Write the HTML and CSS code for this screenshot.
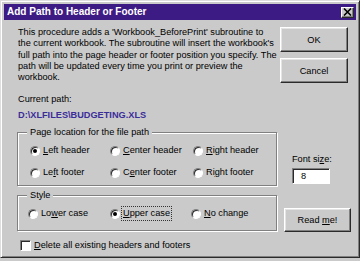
FILE: index.html
```html
<!DOCTYPE html>
<html lang="en">
<head>
  <meta charset="UTF-8">
  <meta name="viewport" content="width=device-width, initial-scale=1.0">
  <title>Add Path to Header or Footer</title>
  <link rel="stylesheet" href="styles.css">
</head>
<body>
  <div class="dialog">
    <div class="titlebar">
      <span class="title">Add Path to Header or Footer</span>
      <span class="close-btn">
        <svg width="9" height="8" viewBox="0 0 9 8"><path d="M1 0.5 L8 7.5 M8 0.5 L1 7.5" stroke="#000" stroke-width="1.6"/></svg>
      </span>
    </div>

    <div class="dialog-body">
      <div class="main-col">
        <p class="intro">This procedure adds a 'Workbook_BeforePrint' subroutine to the current workbook. The subroutine will insert the workbook's full path into the page header or footer position you specify. The path will be updated every time you print or preview the workbook.</p>

        <div class="path-label">Current path:</div>
        <div class="path-value">D:\XLFILES\BUDGETING.XLS</div>

        <div class="group group-location">
          <span class="group-label">Page location for the file path</span>
          <div class="radio-grid location-grid">
            <div class="radio-item"><span class="radio checked"></span><span><u>L</u>eft header</span></div>
            <div class="radio-item"><span class="radio"></span><span><u>C</u>enter header</span></div>
            <div class="radio-item"><span class="radio"></span><span><u>R</u>ight header</span></div>
            <div class="radio-item"><span class="radio"></span><span>Le<u>f</u>t footer</span></div>
            <div class="radio-item"><span class="radio"></span><span>C<u>e</u>nter footer</span></div>
            <div class="radio-item"><span class="radio"></span><span>Ri<u>g</u>ht footer</span></div>
          </div>
        </div>

        <div class="group group-style">
          <span class="group-label">Style</span>
          <div class="radio-grid style-grid">
            <div class="radio-item"><span class="radio"></span><span>Lo<u>w</u>er case</span></div>
            <div class="radio-item"><span class="radio checked"></span><span class="focused"><u>U</u>pper case</span></div>
            <div class="radio-item"><span class="radio"></span><span><u>N</u>o change</span></div>
          </div>
        </div>

        <div class="check-row">
          <span class="checkbox"></span><span><u>D</u>elete all existing headers and footers</span>
        </div>
      </div>

      <div class="side-col">
        <button class="btn btn-ok">OK</button>
        <button class="btn btn-cancel">Cancel</button>
        <div class="font-size-label">Font si<u>z</u>e:</div>
        <div class="text-input">8</div>
        <button class="btn btn-readme">Read <u>m</u>e!</button>
      </div>
    </div>
  </div>
</body>
</html>
```

FILE: styles.css
```css
* {
  box-sizing: border-box;
}

body {
  margin: 0;
  background-color: #cacaca;
  font-family: 'Liberation Sans', Arial, sans-serif;
  font-size: 9.2px;
  line-height: 11.3px;
  color: #000;
}

u {
  text-decoration-thickness: 1px;
  text-underline-offset: 1px;
}

/* Window frame */
.dialog {
  width: 360px;
  height: 258px;
  display: flex;
  flex-direction: column;
  padding: 3px;
  background-color: #cacaca;
  border: 1px solid;
  border-color: #dedede #2a2a2a #2a2a2a #dedede;
  box-shadow: inset 1px 1px 0 #fff, inset -1px -1px 0 #808080;
}

.titlebar {
  height: 16px;
  display: flex;
  align-items: center;
  justify-content: space-between;
  padding: 0 2px 0 3px;
  background-color: #3d1b84;
  color: #fff;
  font-size: 10px;
  font-weight: bold;
}

.close-btn {
  width: 13px;
  height: 11px;
  display: flex;
  align-items: center;
  justify-content: center;
  background-color: #cacaca;
  border: 1px solid;
  border-color: #fff #2a2a2a #2a2a2a #fff;
  box-shadow: inset -1px -1px 0 #808080;
}

.dialog-body {
  flex: 1;
  display: flex;
  padding-left: 13px;
}

/* Left column */
.main-col {
  width: 260px;
}

.intro {
  margin: 7px 0 0 1px;
}

.path-label {
  margin: 11px 0 0 1px;
}

.path-value {
  margin: 4px 0 0 1px;
  font-weight: bold;
  color: #3a2d9a;
}

.group {
  position: relative;
  border: 1px solid #808080;
  box-shadow: 1px 1px 0 #fff, inset 1px 1px 0 #fff;
}

.group-label {
  position: absolute;
  top: -6px;
  left: 9px;
  padding: 0 3px;
  background-color: #cacaca;
}

.group-location {
  height: 54px;
  margin-top: 11px;
  padding: 11px 0 0 12px;
}

.group-style {
  height: 36px;
  margin-top: 9px;
  padding: 11px 0 0 10px;
}

.radio-grid {
  display: grid;
  row-gap: 9px;
}

.location-grid {
  grid-template-columns: 80px 83px auto;
}

.style-grid {
  grid-template-columns: 82px 81px auto;
}

.radio-item {
  height: 13px;
  display: flex;
  align-items: center;
  gap: 3px;
}

.radio {
  position: relative;
  width: 10px;
  height: 10px;
  flex-shrink: 0;
  border-radius: 50%;
  background-color: #fff;
  border: 1px solid;
  border-color: #808080 #fff #fff #808080;
  box-shadow: inset 1px 1px 0 #2a2a2a;
}

.radio.checked::after {
  content: "";
  position: absolute;
  left: 2px;
  top: 2px;
  width: 4px;
  height: 4px;
  border-radius: 50%;
  background-color: #000;
}

.focused {
  outline: 1px dotted #333;
  outline-offset: 1px;
}

.check-row {
  display: flex;
  align-items: center;
  gap: 3px;
  margin: 9px 0 0 3px;
}

.checkbox {
  width: 11px;
  height: 11px;
  background-color: #fff;
  border: 1px solid;
  border-color: #808080 #fff #fff #808080;
  box-shadow: inset 1px 1px 0 #2a2a2a;
}

/* Right column */
.side-col {
  margin-left: 3px;
  display: flex;
  flex-direction: column;
  align-items: flex-start;
}

.btn {
  width: 68px;
  height: 25px;
  padding: 0;
  font-family: inherit;
  font-size: 9.2px;
  color: #000;
  background-color: #cacaca;
  border: 1px solid;
  border-color: #fff #2a2a2a #2a2a2a #fff;
  box-shadow: inset -1px -1px 0 #808080, inset 1px 1px 0 #e4e4e4;
}

.btn-ok {
  margin-top: 7px;
}

.btn-cancel {
  margin-top: 6px;
}

.font-size-label {
  margin: 71px 0 0 12px;
}

.text-input {
  width: 38px;
  height: 16px;
  margin: 3px 0 0 12px;
  padding: 2px 0 0 8px;
  background-color: #fff;
  border: 1px solid;
  border-color: #808080 #fff #fff #808080;
  box-shadow: inset 1px 1px 0 #2a2a2a;
}

.btn-readme {
  width: 67px;
  height: 24px;
  margin: 24px 0 0 4px;
}
```
